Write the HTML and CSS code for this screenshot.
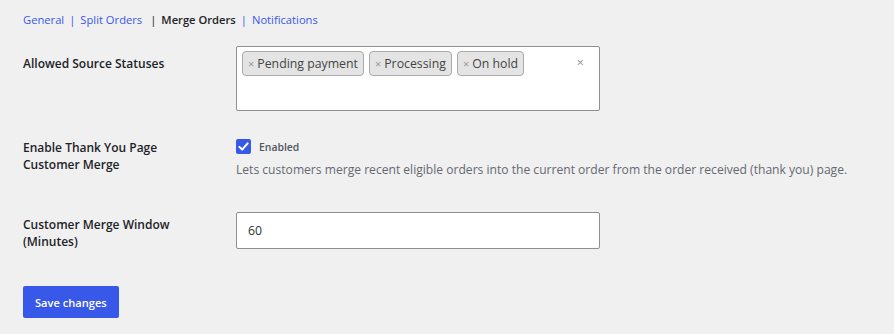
FILE: index.html
```html
<!DOCTYPE html>
<html>
<head>
<meta charset="utf-8">
<link rel="stylesheet" href="styles.css">
</head>
<body>
<div class="wrap">
  <nav class="tabs">
    <a class="tab" href="#">General</a>
    <span class="sep link">|</span>
    <a class="tab" href="#">Split Orders</a>
    <span class="sep cur">|</span>
    <span class="tab current">Merge Orders</span>
    <span class="sep link">|</span>
    <a class="tab" href="#">Notifications</a>
  </nav>

  <div class="form">
    <div class="row row-select">
      <div class="label">Allowed Source Statuses</div>
      <div class="field">
        <div class="select">
          <div class="tags">
            <span class="tag"><span class="tx">×</span>Pending payment</span>
            <span class="tag"><span class="tx">×</span>Processing</span>
            <span class="tag"><span class="tx">×</span>On hold</span>
          </div>
          <span class="clear">×</span>
        </div>
      </div>
    </div>

    <div class="row row-check">
      <div class="label">Enable Thank You Page<br>Customer Merge</div>
      <div class="field">
        <label class="check">
          <span class="box"><svg viewBox="0 0 16 16" width="16" height="16"><path d="M3.6 8.4 L6.6 11.3 L12.4 4.6" fill="none" stroke="#fff" stroke-width="2.2" stroke-linecap="round" stroke-linejoin="round"/></svg></span>
          <span class="check-label">Enabled</span>
        </label>
        <p class="desc">Lets customers merge recent eligible orders into the current order from the order received (thank you) page.</p>
      </div>
    </div>

    <div class="row row-input">
      <div class="label">Customer Merge Window<br>(Minutes)</div>
      <div class="field">
        <div class="input">60</div>
      </div>
    </div>
  </div>

  <div class="actions">
    <button class="btn">Save changes</button>
  </div>
</div>
</body>
</html>
```

FILE: styles.css
```css
html, body {
  margin: 0;
  padding: 0;
  background: #f0f0f1;
}
body {
  font-family: "Open Sans", "Noto Sans", sans-serif;
  color: #1d2327;
  font-size: 12px;
}
.wrap {
  padding: 10px 23px 0 23px;
}
.tabs {
  display: flex;
  align-items: center;
  height: 19px;
  font-size: 11.2px;
  line-height: 19px;
}
.tab {
  color: #3858e9;
  text-decoration: none;
}
.tab.current {
  color: #1d2327;
  font-weight: 600;
}
.sep {
  margin: 0 5px 0 5px;
}
.sep.link { color: #3858e9; }
.sep.cur { color: #1d2327; margin-left: 8px; }

.form {
  margin-top: 17px;
}
.row {
  display: grid;
  grid-template-columns: 213px 364px;
}
.label {
  font-size: 12px;
  font-weight: 600;
  line-height: 17px;
  color: #1d2327;
}
.row-select .label { padding-top: 9px; }
.row-select { height: 88px; }
.select {
  box-sizing: border-box;
  width: 364px;
  height: 65px;
  background: #fff;
  border: 1px solid #8c8f94;
  border-radius: 2px;
  position: relative;
  padding: 4px 5px;
}
.tags {
  display: flex;
  gap: 5px;
}
.tag {
  box-sizing: border-box;
  height: 25px;
  display: inline-flex;
  align-items: center;
  padding: 0 5px 0 5px;
  background: #e4e4e4;
  border: 1px solid #aaa;
  border-radius: 4px;
  font-size: 12.3px;
  color: #444;
}
.tx {
  color: #999;
  font-size: 11px;
  margin-right: 3px;
}
.clear {
  position: absolute;
  right: 15px;
  top: 6px;
  color: #999;
  font-size: 13px;
}

.row-check { height: 78px; }
.row-check .label { padding-top: 5px; }
.check {
  display: flex;
  align-items: center;
  gap: 8px;
  margin-top: 5px;
}
.box {
  width: 15px;
  height: 15px;
  background: #3858e9;
  border-radius: 2px;
  display: block;
  overflow: hidden;
}
.box svg { display: block; width: 15px; height: 15px; }
.check-label {
  font-size: 10.4px;
  font-weight: 600;
  color: #50575e;
}
.desc {
  margin: 7px 0 0 0;
  font-size: 12.1px;
  color: #646970;
  white-space: nowrap;
}

.row-input .label { padding-top: 4px; }
.input {
  box-sizing: border-box;
  width: 364px;
  height: 37px;
  background: #fff;
  border: 1px solid #8c8f94;
  border-radius: 2px;
  padding: 0 11px;
  line-height: 35px;
  font-size: 12.3px;
  color: #2c3338;
}
.actions {
  margin-top: 36px;
}
.btn {
  font-family: inherit;
  background: #3858e9;
  color: #fff;
  border: none;
  border-radius: 2px;
  height: 32px;
  padding: 0 12px;
  font-size: 11.1px;
  font-weight: 600;
}
```
